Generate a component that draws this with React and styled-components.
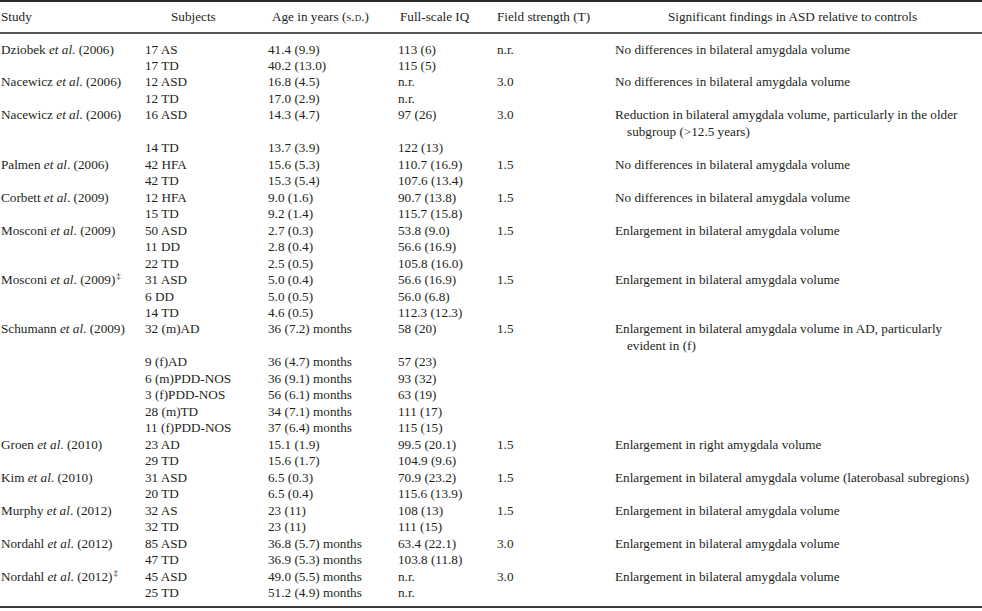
import React from "react";
import styled, { createGlobalStyle } from "styled-components";

const GlobalStyle = createGlobalStyle`
  html, body {
    margin: 0;
    padding: 0;
    background: #ffffff;
  }
  body {
    font-family: "Liberation Serif", "Times New Roman", serif;
    color: #231f20;
  }
`;

const COLUMNS = "144px 123px 130px 99px 118px 1fr";

// studies with one line per subject group
const studies = [
  {
    author: "Dziobek",
    year: "2006",
    field: "n.r.",
    finding: ["No differences in bilateral amygdala volume"],
    groups: [
      ["17 AS", "41.4 (9.9)", "113 (6)"],
      ["17 TD", "40.2 (13.0)", "115 (5)"],
    ],
  },
  {
    author: "Nacewicz",
    year: "2006",
    field: "3.0",
    finding: ["No differences in bilateral amygdala volume"],
    groups: [
      ["12 ASD", "16.8 (4.5)", "n.r."],
      ["12 TD", "17.0 (2.9)", "n.r."],
    ],
  },
  {
    author: "Nacewicz",
    year: "2006",
    field: "3.0",
    finding: [
      "Reduction in bilateral amygdala volume, particularly in the older",
      "subgroup (>12.5 years)",
    ],
    groups: [
      ["16 ASD", "14.3 (4.7)", "97 (26)"],
      ["14 TD", "13.7 (3.9)", "122 (13)"],
    ],
  },
  {
    author: "Palmen",
    year: "2006",
    field: "1.5",
    finding: ["No differences in bilateral amygdala volume"],
    groups: [
      ["42 HFA", "15.6 (5.3)", "110.7 (16.9)"],
      ["42 TD", "15.3 (5.4)", "107.6 (13.4)"],
    ],
  },
  {
    author: "Corbett",
    year: "2009",
    field: "1.5",
    finding: ["No differences in bilateral amygdala volume"],
    groups: [
      ["12 HFA", "9.0 (1.6)", "90.7 (13.8)"],
      ["15 TD", "9.2 (1.4)", "115.7 (15.8)"],
    ],
  },
  {
    author: "Mosconi",
    year: "2009",
    field: "1.5",
    finding: ["Enlargement in bilateral amygdala volume"],
    groups: [
      ["50 ASD", "2.7 (0.3)", "53.8 (9.0)"],
      ["11 DD", "2.8 (0.4)", "56.6 (16.9)"],
      ["22 TD", "2.5 (0.5)", "105.8 (16.0)"],
    ],
  },
  {
    author: "Mosconi",
    year: "2009",
    dagger: true,
    field: "1.5",
    finding: ["Enlargement in bilateral amygdala volume"],
    groups: [
      ["31 ASD", "5.0 (0.4)", "56.6 (16.9)"],
      ["6 DD", "5.0 (0.5)", "56.0 (6.8)"],
      ["14 TD", "4.6 (0.5)", "112.3 (12.3)"],
    ],
  },
  {
    author: "Schumann",
    year: "2009",
    field: "1.5",
    finding: [
      "Enlargement in bilateral amygdala volume in AD, particularly",
      "evident in (f)",
    ],
    groups: [
      ["32 (m)AD", "36 (7.2) months", "58 (20)"],
      ["9 (f)AD", "36 (4.7) months", "57 (23)"],
      ["6 (m)PDD-NOS", "36 (9.1) months", "93 (32)"],
      ["3 (f)PDD-NOS", "56 (6.1) months", "63 (19)"],
      ["28 (m)TD", "34 (7.1) months", "111 (17)"],
      ["11 (f)PDD-NOS", "37 (6.4) months", "115 (15)"],
    ],
  },
  {
    author: "Groen",
    year: "2010",
    field: "1.5",
    finding: ["Enlargement in right amygdala volume"],
    groups: [
      ["23 AD", "15.1 (1.9)", "99.5 (20.1)"],
      ["29 TD", "15.6 (1.7)", "104.9 (9.6)"],
    ],
  },
  {
    author: "Kim",
    year: "2010",
    field: "1.5",
    finding: [
      "Enlargement in bilateral amygdala volume (laterobasal subregions)",
    ],
    groups: [
      ["31 ASD", "6.5 (0.3)", "70.9 (23.2)"],
      ["20 TD", "6.5 (0.4)", "115.6 (13.9)"],
    ],
  },
  {
    author: "Murphy",
    year: "2012",
    field: "1.5",
    finding: ["Enlargement in bilateral amygdala volume"],
    groups: [
      ["32 AS", "23 (11)", "108 (13)"],
      ["32 TD", "23 (11)", "111 (15)"],
    ],
  },
  {
    author: "Nordahl",
    year: "2012",
    field: "3.0",
    finding: ["Enlargement in bilateral amygdala volume"],
    groups: [
      ["85 ASD", "36.8 (5.7) months", "63.4 (22.1)"],
      ["47 TD", "36.9 (5.3) months", "103.8 (11.8)"],
    ],
  },
  {
    author: "Nordahl",
    year: "2012",
    dagger: true,
    field: "3.0",
    finding: ["Enlargement in bilateral amygdala volume"],
    groups: [
      ["45 ASD", "49.0 (5.5) months", "n.r."],
      ["25 TD", "51.2 (4.9) months", "n.r."],
    ],
  },
];

const App = () => {
  return (
    <>
      <GlobalStyle />
      <Table>
        <HeaderRow>
          <HeadCell>Study</HeadCell>
          <HeadCell $offset={26}>Subjects</HeadCell>
          <HeadCell $offset={4}>
            Age in years (<SmallCaps>s.d.</SmallCaps>)
          </HeadCell>
          <HeadCell $offset={2}>Full-scale IQ</HeadCell>
          <HeadCell>Field strength (T)</HeadCell>
          <HeadCell $offset={53}>
            Significant findings in ASD relative to controls
          </HeadCell>
        </HeaderRow>
        <Body>
          {studies.map((study, si) =>
            study.groups.map((g, gi) => (
              <Row key={`${si}-${gi}`}>
                <Cell>
                  {gi === 0 && (
                    <>
                      {study.author} <em>et al</em>. ({study.year})
                      {study.dagger && <Dagger>‡</Dagger>}
                    </>
                  )}
                </Cell>
                <Cell>{g[0]}</Cell>
                <Cell>{g[1]}</Cell>
                <Cell>{g[2]}</Cell>
                <Cell>{gi === 0 && study.field}</Cell>
                <Cell>
                  {gi === 0 &&
                    study.finding.map((line, li) => (
                      <FindingLine key={li} $wrapped={li > 0}>
                        {line}
                      </FindingLine>
                    ))}
                </Cell>
              </Row>
            ))
          )}
        </Body>
      </Table>
    </>
  );
};

export default App;

const Table = styled.div`
  width: 982px;
  border-top: 2px solid #2b2b2b;
  border-bottom: 2px solid #3a3a3a;
  font-size: 13.2px;
`;

const HeaderRow = styled.div`
  display: grid;
  grid-template-columns: ${COLUMNS};
  align-items: center;
  height: 30px;
  padding-left: 1px;
  border-bottom: 2px solid #555555;
  white-space: nowrap;
`;

const HeadCell = styled.div`
  padding-left: ${(p) => p.$offset || 0}px;
  padding-bottom: 1px;
`;

const SmallCaps = styled.span`
  font-variant: small-caps;
`;

const Body = styled.div`
  padding: 7.5px 0 5px 1px;
`;

const Row = styled.div`
  display: grid;
  grid-template-columns: ${COLUMNS};
  line-height: 16.47px;
  white-space: nowrap;
`;

const Cell = styled.div`
  em {
    font-style: italic;
  }
`;

const Dagger = styled.sup`
  font-size: 9px;
  line-height: 0;
  vertical-align: 5px;
  margin-left: 1px;
`;

const FindingLine = styled.div`
  padding-left: ${(p) => (p.$wrapped ? "12px" : "0")};
`;
